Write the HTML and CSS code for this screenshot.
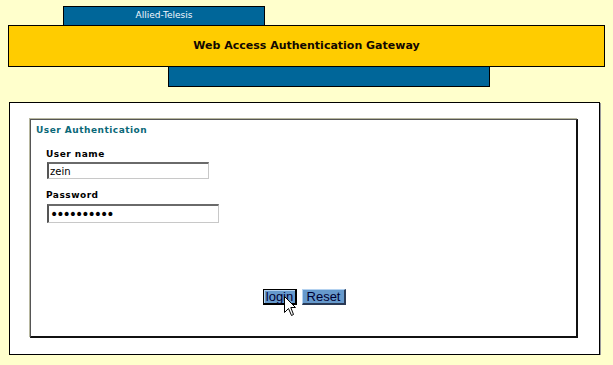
FILE: index.html
```html
<!DOCTYPE html>
<html lang="en">
  <head>
    <meta charset="utf-8" />
    <title>Web Access Authentication Gateway</title>
    <link rel="stylesheet" href="styles.css">
  </head>
  <body>
    <div class="banner">
      <div class="tab">Allied-Telesis</div>
      <div class="titlebar">Web Access Authentication Gateway</div>
      <div class="subbar"></div>
    </div>

    <form class="panel" onsubmit="return false">
      <div class="box">
        <div class="box-title">User Authentication</div>
        <div class="fields">
          <label class="label" for="user">User name</label>
          <input id="user" class="field field-user" type="text" value="zein" />
          <label class="label label-pass" for="pass">Password</label>
          <input id="pass" class="field field-pass" type="password" value="zein123456" />
        </div>
        <div class="actions">
          <button class="btn btn-login" type="submit">login</button>
          <button class="btn btn-reset" type="reset">Reset</button>
        </div>
      </div>
    </form>

    <!-- mouse pointer sitting over the login button -->
    <svg class="cursor" width="13" height="21" viewBox="0 0 13 21">
      <path d="M0.5 0.5 L0.5 16.5 L4.5 12.5 L7.5 19.5 L9.5 18.5 L6.8 11.5 L11.5 11.5 Z"
            fill="#fff" stroke="#000" stroke-width="1" stroke-linejoin="miter" />
    </svg>
  </body>
</html>
```

FILE: styles.css
```css
body {
  margin: 0;
  background: #ffffcc;
  font-family: "DejaVu Sans", sans-serif;
}

.banner {
  padding-top: 6px;
}

.tab {
  box-sizing: border-box;
  width: 202px;
  height: 19px;
  margin-left: 63px;
  border: 1px solid #000;
  border-bottom: 0;
  background: #006699;
  color: #f4f8ff;
  font-size: 9px;
  line-height: 17px;
  text-align: center;
}

.titlebar {
  box-sizing: border-box;
  width: 597px;
  height: 42px;
  margin-left: 8px;
  border: 1px solid #000;
  background: #ffcc00;
  color: #120800;
  font-size: 11px;
  font-weight: bold;
  line-height: 40px;
  text-align: center;
}

.subbar {
  box-sizing: border-box;
  width: 322px;
  height: 20px;
  margin-left: 168px;
  border: 1px solid #000;
  border-top: 0;
  background: #006699;
}

.panel {
  box-sizing: border-box;
  width: 591px;
  height: 253px;
  margin: 15px 0 0 9px;
  padding: 16px 0 0 20px;
  border: 1px solid #000;
  background: #fff;
  box-shadow: 1px 1px 0 #9a9a9a;
}

.box {
  box-sizing: border-box;
  width: 548px;
  height: 219px;
  border-style: solid;
  border-width: 1px 2px 2px 1px;
  border-color: #555 #111 #111 #555;
  box-shadow: -1px -1px 0 #b8b8a0;
}

.box-title {
  margin: 5px 0 0 5px;
  color: #0a6878;
  font-size: 9px;
  font-weight: bold;
  letter-spacing: 0.5px;
  line-height: 11px;
}

.fields {
  margin: 13px 0 0 15px;
}

.label {
  display: block;
  color: #000;
  font-size: 9px;
  font-weight: bold;
  letter-spacing: 0.5px;
  line-height: 11px;
}

.label-pass {
  margin-top: 11px;
}

.field {
  display: block;
  box-sizing: border-box;
  margin: 2px 0 0 1px;
  padding: 0 1px;
  border-style: solid;
  border-width: 2px 1px 1px 2px;
  border-color: #6a6a6a #c8c8c8 #c8c8c8 #555;
  background: #fff;
  color: #000;
  font-family: "DejaVu Sans", sans-serif;
  font-size: 10px;
  outline: none;
}

.field-user {
  width: 162px;
  height: 17px;
}

.field-pass {
  width: 172px;
  height: 19px;
  margin-top: 3px;
  font-size: 14px;
  letter-spacing: -2px;
}

.actions {
  display: flex;
  justify-content: center;
  gap: 5px;
  margin-top: 66px;
  padding-left: 2px;
}

.btn {
  box-sizing: border-box;
  height: 16px;
  padding: 0;
  border-style: solid;
  border-width: 1px 2px 2px 1px;
  border-color: #b4d2f0 #2a3a55 #2a3a55 #b4d2f0;
  background: #6699cc;
  color: #000033;
  font-family: "Liberation Sans", sans-serif;
  font-size: 13px;
  line-height: 12px;
}

.btn-login {
  width: 34px;
  border-color: #000;
  box-shadow: inset 1px 1px 0 #b4d2f0;
}

.btn-reset {
  width: 44px;
}

.cursor {
  position: absolute;
  left: 284px;
  top: 296px;
}
```
